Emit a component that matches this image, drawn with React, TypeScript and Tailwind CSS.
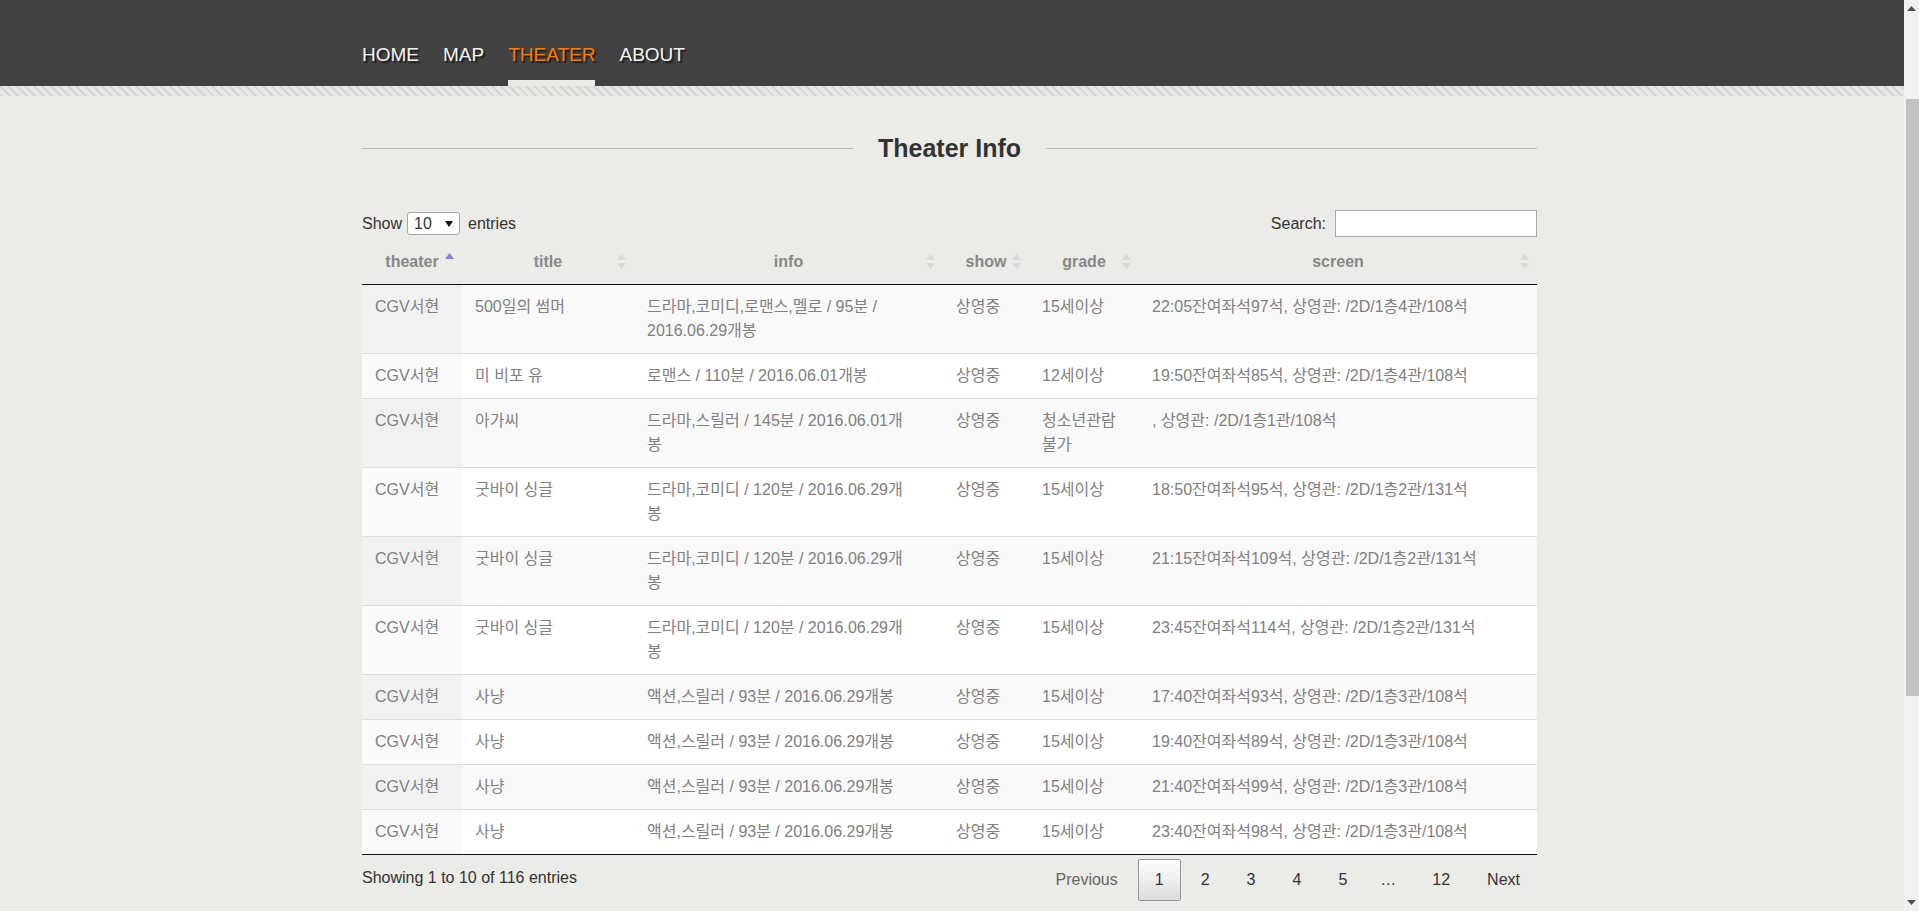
const navs = [
  { label: "HOME", active: false },
  { label: "MAP", active: false },
  { label: "THEATER", active: true },
  { label: "ABOUT", active: false },
];

interface Row {
  theater: string;
  title: string;
  info: string[];
  show: string;
  grade: string[];
  screen: string;
}

const rows: Row[] = [
  {
    theater: "CGV서현",
    title: "500일의 썸머",
    info: ["드라마,코미디,로맨스,멜로 / 95분 /", "2016.06.29개봉"],
    show: "상영중",
    grade: ["15세이상"],
    screen: "22:05잔여좌석97석, 상영관: /2D/1층4관/108석",
  },
  {
    theater: "CGV서현",
    title: "미 비포 유",
    info: ["로맨스 / 110분 / 2016.06.01개봉"],
    show: "상영중",
    grade: ["12세이상"],
    screen: "19:50잔여좌석85석, 상영관: /2D/1층4관/108석",
  },
  {
    theater: "CGV서현",
    title: "아가씨",
    info: ["드라마,스릴러 / 145분 / 2016.06.01개", "봉"],
    show: "상영중",
    grade: ["청소년관람", "불가"],
    screen: ", 상영관: /2D/1층1관/108석",
  },
  {
    theater: "CGV서현",
    title: "굿바이 싱글",
    info: ["드라마,코미디 / 120분 / 2016.06.29개", "봉"],
    show: "상영중",
    grade: ["15세이상"],
    screen: "18:50잔여좌석95석, 상영관: /2D/1층2관/131석",
  },
  {
    theater: "CGV서현",
    title: "굿바이 싱글",
    info: ["드라마,코미디 / 120분 / 2016.06.29개", "봉"],
    show: "상영중",
    grade: ["15세이상"],
    screen: "21:15잔여좌석109석, 상영관: /2D/1층2관/131석",
  },
  {
    theater: "CGV서현",
    title: "굿바이 싱글",
    info: ["드라마,코미디 / 120분 / 2016.06.29개", "봉"],
    show: "상영중",
    grade: ["15세이상"],
    screen: "23:45잔여좌석114석, 상영관: /2D/1층2관/131석",
  },
  {
    theater: "CGV서현",
    title: "사냥",
    info: ["액션,스릴러 / 93분 / 2016.06.29개봉"],
    show: "상영중",
    grade: ["15세이상"],
    screen: "17:40잔여좌석93석, 상영관: /2D/1층3관/108석",
  },
  {
    theater: "CGV서현",
    title: "사냥",
    info: ["액션,스릴러 / 93분 / 2016.06.29개봉"],
    show: "상영중",
    grade: ["15세이상"],
    screen: "19:40잔여좌석89석, 상영관: /2D/1층3관/108석",
  },
  {
    theater: "CGV서현",
    title: "사냥",
    info: ["액션,스릴러 / 93분 / 2016.06.29개봉"],
    show: "상영중",
    grade: ["15세이상"],
    screen: "21:40잔여좌석99석, 상영관: /2D/1층3관/108석",
  },
  {
    theater: "CGV서현",
    title: "사냥",
    info: ["액션,스릴러 / 93분 / 2016.06.29개봉"],
    show: "상영중",
    grade: ["15세이상"],
    screen: "23:40잔여좌석98석, 상영관: /2D/1층3관/108석",
  },
];

const columns = ["theater", "title", "info", "show", "grade", "screen"];

const SortIcon = ({ active }: { active: boolean }) =>
  active ? (
    <svg width="9" height="18" viewBox="0 0 9 18" className="absolute right-[8px] top-[12px]">
      <path d="M0 7 L4.5 1 L9 7 Z" fill="#7f80e0" />
    </svg>
  ) : (
    <svg width="9" height="18" viewBox="0 0 9 18" className="absolute right-[8px] top-[13px]">
      <path d="M0 7 L4.5 1 L9 7 Z" fill="#d9d9d9" />
      <path d="M0 10 L9 10 L4.5 16 Z" fill="#d9d9d9" />
    </svg>
  );

const Lines = ({ lines }: { lines: string[] }) => (
  <>
    {lines.map((l, i) => (
      <div key={i} className="whitespace-nowrap">
        {l}
      </div>
    ))}
  </>
);

// window scrollbar as it appears in the shot
const Scrollbar = () => (
  <div className="fixed right-0 top-0 flex h-screen w-[15px] flex-col bg-[#f1f1f1]">
    <div className="flex h-[17px] items-center justify-center">
      <svg width="9" height="5" viewBox="0 0 9 5">
        <path d="M0 5 L4.5 0 L9 5 Z" fill="#505050" />
      </svg>
    </div>
    <div className="relative flex-1">
      <div className="absolute left-[2px] right-0 top-[82px] h-[597px] bg-[#c1c1c1]" />
    </div>
    <div className="flex h-[17px] items-center justify-center">
      <svg width="9" height="5" viewBox="0 0 9 5">
        <path d="M0 0 L9 0 L4.5 5 Z" fill="#505050" />
      </svg>
    </div>
  </div>
);

const pageBtn = "ml-[3px] border border-transparent px-[16px] py-[8px] leading-[24px] text-[#333]";

export default function App() {
  return (
    <div className="min-h-screen bg-[#ebebe7] pr-[15px] font-['Liberation_Sans','Noto_Sans_CJK_KR',sans-serif] text-[16px] text-[#333]">
      {/* top nav */}
      <header className="h-[86px] bg-[#424242]">
        <nav className="mx-auto flex h-full w-[1180px] items-end gap-[24px] pr-[5px]">
          {navs.map((n) => (
            <a key={n.label} className="flex cursor-pointer flex-col">
              <span
                className={
                  n.active
                    ? "text-[19px] leading-[24px] text-[#ff7800] [text-shadow:2px_2px_1px_#1e1e1e]"
                    : "text-[19px] leading-[24px] text-[#f3f3f3] [text-shadow:2px_2px_1px_#1e1e1e]"
                }
              >
                {n.label}
              </span>
              <span className={n.active ? "mt-[13px] h-[6px] bg-[#ebebe7]" : "mt-[13px] h-[6px]"} />
            </a>
          ))}
        </nav>
      </header>
      <div className="h-[10px] bg-[#e4e4e0] bg-[image:repeating-linear-gradient(45deg,#d5d5d0_0px,#d5d5d0_2px,#e6e6e2_2px,#e6e6e2_6px)]" />

      <main className="mx-auto w-[1180px] pr-[5px]">
        {/* title */}
        <div className="flex items-center gap-[25px] pt-[37px]">
          <div className="h-px flex-1 bg-[#bdbdbb]" />
          <h2 className="text-[25px] font-bold leading-[30px] text-[#333]">Theater Info</h2>
          <div className="h-px flex-1 bg-[#bdbdbb]" />
        </div>

        {/* controls */}
        <div className="mt-[47px] flex h-[27px] items-center justify-between">
          <div className="flex items-center">
            <span>Show</span>
            <div className="ml-[5px] mr-[8px] flex h-[23px] w-[53px] items-center justify-between rounded-[3px] border border-[#a6a6a6] bg-white pl-[6px] pr-[6px]">
              <span className="leading-[20px]">10</span>
              <svg width="8" height="6" viewBox="0 0 8 6">
                <path d="M0 0 L8 0 L4 6 Z" fill="#111" />
              </svg>
            </div>
            <span>entries</span>
          </div>
          <div className="flex items-center">
            <span>Search:</span>
            <input className="ml-[9px] h-[27px] w-[202px] border border-[#a9a9a9] bg-white px-[4px] outline-none" />
          </div>
        </div>

        {/* table */}
        <table className="mt-[3px] w-full table-fixed border-collapse border-b border-[#111]">
          <colgroup>
            <col className="w-[100px]" />
            <col className="w-[172px]" />
            <col className="w-[309px]" />
            <col className="w-[86px]" />
            <col className="w-[110px]" />
            <col className="w-[398px]" />
          </colgroup>
          <thead>
            <tr className="border-b border-[#111]">
              {columns.map((c, i) => (
                <th
                  key={c}
                  className="relative py-[10px] text-center text-[16px] font-bold leading-[24px] text-[#888]"
                >
                  {c}
                  <SortIcon active={i === 0} />
                </th>
              ))}
            </tr>
          </thead>
          <tbody className="text-[#808080]">
            {rows.map((r, i) => {
              const odd = i % 2 === 0;
              const cell = odd
                ? "bg-[#f9f9f9] px-[13px] py-[10px] align-top leading-[24px]"
                : "bg-white px-[13px] py-[10px] align-top leading-[24px]";
              return (
                <tr key={i} className={i === 0 ? "" : "border-t border-[#ddd]"}>
                  <td
                    className={
                      odd
                        ? "bg-[#f1f1f1] px-[13px] py-[10px] align-top leading-[24px]"
                        : "bg-[#fafafa] px-[13px] py-[10px] align-top leading-[24px]"
                    }
                  >
                    {r.theater}
                  </td>
                  <td className={cell}>{r.title}</td>
                  <td className={cell}>
                    <Lines lines={r.info} />
                  </td>
                  <td className={cell}>{r.show}</td>
                  <td className={cell}>
                    <Lines lines={r.grade} />
                  </td>
                  <td className={cell}>
                    <span className="whitespace-nowrap">{r.screen}</span>
                  </td>
                </tr>
              );
            })}
          </tbody>
        </table>

        {/* footer */}
        <div className="flex items-start justify-between pt-[4px]">
          <div className="pt-[7px] leading-[24px] text-[#333]">Showing 1 to 10 of 116 entries</div>
          <div className="flex items-center">
            <span className="ml-[3px] border border-transparent px-[16px] py-[8px] leading-[24px] text-[#666]">Previous</span>
            <span className="ml-[3px] rounded-[2px] border border-[#979797] bg-linear-to-b from-white to-[#dcdcdc] px-[16px] py-[8px] leading-[24px] text-[#333]">
              1
            </span>
            <span className={pageBtn}>2</span>
            <span className={pageBtn}>3</span>
            <span className={pageBtn}>4</span>
            <span className={pageBtn}>5</span>
            <span className="px-[16px] py-[8px] leading-[24px] text-[#333]">…</span>
            <span className={pageBtn}>12</span>
            <span className={pageBtn}>Next</span>
          </div>
        </div>
      </main>
      <Scrollbar />
    </div>
  );
}
